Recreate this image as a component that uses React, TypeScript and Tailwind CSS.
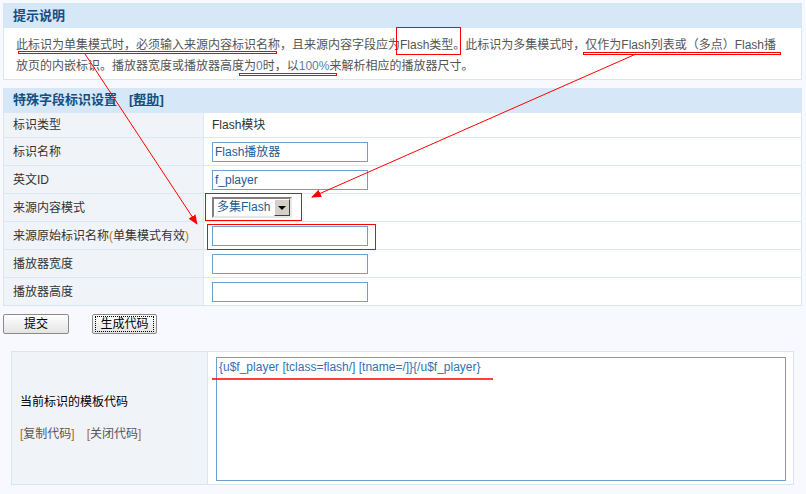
import type { ReactNode } from "react";

const FONT = { fontFamily: '"Liberation Sans", "Noto Sans CJK SC", sans-serif' };

function TextInput({ value = "" }: { value?: string }) {
  return (
    <div className="w-[156px] h-[20px] border border-[#6d9fd0] bg-white px-[2px] text-[12px] leading-[18px] text-[#1d5c94]">
      {value}
    </div>
  );
}

// old-style windows dropdown
function ClassicSelect({ value }: { value: string }) {
  return (
    <div className="flex items-center w-[80px] h-[21px] border-2 border-t-[#808080] border-l-[#808080] border-b-[#e8e8e8] border-r-[#e8e8e8] bg-white">
      <span className="flex-1 pl-[3px] text-[12px] leading-[17px] text-[#1d5c94]">{value}</span>
      <span className="flex items-center justify-center w-[16px] h-[17px] bg-[#d4d0c8] border border-t-white border-l-white border-b-[#404040] border-r-[#404040]">
        <span className="w-0 h-0 border-l-[4px] border-r-[4px] border-t-[4px] border-l-transparent border-r-transparent border-t-black" />
      </span>
    </div>
  );
}

function Row({ label, children, first }: { label: ReactNode; children: ReactNode; first?: boolean }) {
  return (
    <div className={`grid grid-cols-[200px_1fr] border-t border-[#d9e8f4] ${first ? "h-[25px]" : "h-[28px]"}`}>
      <div className="flex items-center pl-[9px] bg-[#f0f4f8] border-r border-[#d9e8f4] text-[12px] text-[#333]">{label}</div>
      <div className="flex items-center pl-[8px] bg-white text-[12px] text-[#333]">{children}</div>
    </div>
  );
}

function ClassicButton({ label, focused, w }: { label: string; focused?: boolean; w: string }) {
  return (
    <div className={`${w} h-[20px] flex items-center justify-center rounded-[2px] border border-[#8a8a8a] bg-gradient-to-b from-white to-[#e4e4e4] text-[12px] text-black`}>
      <span className={focused ? "px-[4px] border border-dotted border-black leading-[14px]" : ""}>{label}</span>
    </div>
  );
}

function Annotations() {
  return (
    <svg className="absolute top-0 left-0 pointer-events-none" width={806} height={494}>
      <defs>
        <marker id="head" markerWidth="10" markerHeight="8" refX="9" refY="4" orient="auto" markerUnits="userSpaceOnUse">
          <path d="M0,0 L10,4 L0,8 z" fill="#ff0000" />
        </marker>
      </defs>
      <g fill="none" stroke="#ff0000" strokeWidth={1}>
        <rect x={18.5} y={51.5} width={258} height={2} />
        <rect x={396.5} y={27.5} width={64} height={27} />
        <rect x={583.5} y={52.5} width={197} height={2} />
        <rect x={239.5} y={73.5} width={97} height={2} />
        <rect x={205.5} y={193.5} width={96} height={27} />
        <rect x={207.5} y={224.5} width={168} height={25} />
        <line x1={85} y1={54} x2={197} y2={224} markerEnd="url(#head)" />
        <line x1={636} y1={54} x2={312} y2={197} markerEnd="url(#head)" />
        <line x1={212} y1={379} x2={493} y2={379} strokeWidth={1.5} />
      </g>
    </svg>
  );
}

export default function App() {
  return (
    <div className="relative w-[806px] h-[494px] bg-[#f8f9fe] pt-[3px] px-[3px] overflow-hidden" style={FONT}>
      {/* notes */}
      <div className="w-[799px] border border-[#d6e6f4] border-t-0">
        <div className="h-[25px] flex items-center pl-[9px] bg-[#d6e7f7] text-[13px] font-bold text-[#154e80]">提示说明</div>
        <div className="bg-white pl-[12px] pt-[7px] pb-[2px] text-[12px] leading-[21px] text-[#555] whitespace-nowrap">
          <div>此标识为单集模式时，必须输入来源内容标识名称，且来源内容字段应为Flash类型。此标识为多集模式时，仅作为Flash列表或（多点）Flash播</div>
          <div>放页的内嵌标识。播放器宽度或播放器高度为<span className="text-[#5a7ea6]">0</span>时，以<span className="text-[#5a7ea6]">100%</span>来解析相应的播放器尺寸。</div>
        </div>
      </div>

      {/* field settings */}
      <div className="mt-[8px] w-[799px] border border-[#d6e6f4] border-t-0">
        <div className="h-[24px] flex items-center pl-[9px] bg-[#d6e7f7] text-[13px] font-bold text-[#154e80]">
          特殊字段标识设置
          <span className="ml-[12px]">[<span className="underline">帮助</span>]</span>
        </div>
        <Row label="标识类型" first>Flash模块</Row>
        <Row label="标识名称"><TextInput value="Flash播放器" /></Row>
        <Row label="英文ID"><TextInput value="f_player" /></Row>
        <Row label="来源内容模式"><ClassicSelect value="多集Flash" /></Row>
        <Row label={<span>来源原始标识名称<span className="text-[#c07a20]">(</span>单集模式有效<span className="text-[#c07a20]">)</span></span>}><TextInput /></Row>
        <Row label="播放器宽度"><TextInput /></Row>
        <Row label="播放器高度"><TextInput /></Row>
      </div>

      <div className="flex gap-[23px] mt-[8px]">
        <ClassicButton label="提交" w="w-[66px]" />
        <ClassicButton label="生成代码" focused w="w-[65px]" />
      </div>

      {/* template code */}
      <div className="mt-[17px] ml-[8px] w-[783px] h-[134px] grid grid-cols-[196px_1fr] border border-[#d6e6f4]">
        <div className="flex flex-col justify-center pl-[8px] bg-[#f0f4f8] border-r border-[#d6e6f4]">
          <div className="text-[12px] text-black">当前标识的模板代码</div>
          <div className="mt-[14px] flex gap-[12px] text-[12px] text-[#555]">
            <span><span className="text-[#b06a10]">[</span>复制代码<span className="text-[#b06a10]">]</span></span>
            <span><span className="text-[#b06a10]">[</span>关闭代码<span className="text-[#b06a10]">]</span></span>
          </div>
        </div>
        <div className="bg-white pl-[8px] pt-[5px]">
          <div className="w-[570px] h-[124px] border border-[#6d9fd0] px-[2px] text-[12px] leading-[18px] text-[#2f72b4]">
            {"{u$f_player [tclass=flash/] [tname=/]}{/u$f_player}"}
          </div>
        </div>
      </div>

      <Annotations />
    </div>
  );
}
